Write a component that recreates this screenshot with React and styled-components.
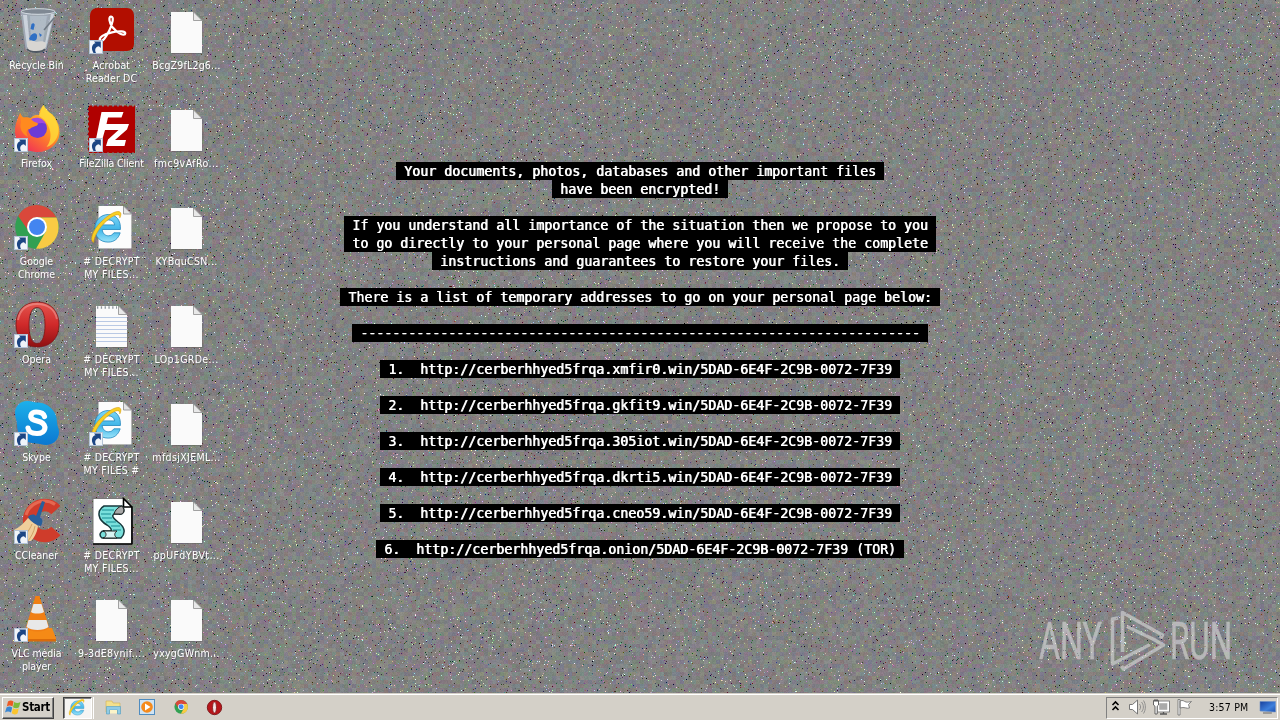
import React, { useEffect, useRef } from "react";
import styled, { createGlobalStyle } from "styled-components";

const Global = createGlobalStyle`
  * { box-sizing: border-box; }
  body { margin: 0; overflow: hidden; background: #808080; }
`;

const Screen = styled.div`
  position: relative;
  width: 1280px;
  height: 720px;
  display: flex;
  flex-direction: column;
  overflow: hidden;
  font-family: "DejaVu Sans Condensed", "DejaVu Sans", sans-serif;
`;

const NoiseCanvas = styled.canvas`
  position: absolute;
  inset: 0;
`;

const Desktop = styled.main`
  position: relative;
  flex: 1;
  display: flex;
`;

const IconGrid = styled.div`
  width: 224px;
  padding-top: 7px;
  margin-left: -1px;
  display: grid;
  grid-template-columns: repeat(3, 75px);
  grid-template-rows: repeat(7, 98px);
  grid-auto-flow: column;
`;

const IconCell = styled.div`
  display: flex;
  flex-direction: column;
  align-items: center;
`;

const IconArt = styled.svg`
  display: block;
  width: 48px;
  height: 48px;
  margin-right: 1px;
  flex: none;
`;

const Label = styled.div`
  margin-top: 4px;
  text-align: center;
  color: #fff;
  font-size: 10.5px;
  line-height: 13px;
  white-space: nowrap;
  letter-spacing: ${(p) => p.$track || 0}px;
  text-shadow: 1px 1px 1px rgba(0, 0, 0, 0.2);
`;

const Message = styled.section`
  flex: none;
  width: 640px;
  margin-left: 97px;
  padding-top: 162px;
  display: flex;
  flex-direction: column;
  align-items: center;
`;

const MessageLine = styled.div`
  height: 18px;
  margin-bottom: ${(p) => (p.$gap ? 18 : 0)}px;
  padding: 1px 8px 0;
  background: #000;
  color: #fff;
  font: 13.29px/18px "DejaVu Sans Mono", monospace;
  text-shadow: 0.7px 0 #fff;
  white-space: pre;
`;

const Watermark = styled.div`
  position: absolute;
  left: 1038px;
  top: 608px;
  display: flex;
  align-items: center;
  height: 64px;
  opacity: 0.62;
`;

const MarkWord = styled.svg`
  display: block;
  width: ${(p) => p.$w}px;
  height: 64px;
  overflow: visible;
`;

const MarkText = styled.text`
  font-family: Roboto, sans-serif;
  font-size: 52px;
  fill: #d8d8d8;
  stroke: #d8d8d8;
  stroke-width: 0.6px;
`;

const Taskbar = styled.footer`
  position: relative;
  height: 28px;
  flex: none;
  background: #d4d0c8;
  border-top: 1px solid #d4d0c8;
  box-shadow: inset 0 1px #fff;
  display: flex;
  align-items: flex-start;
  padding: 3px 2px 2px 2px;
`;

const StartButton = styled.div`
  width: 52px;
  height: 22px;
  display: flex;
  align-items: center;
  gap: 1px;
  padding: 0 0 2px 1px;
  border: 1px solid;
  border-color: #fff #404040 #404040 #fff;
  box-shadow: inset -1px -1px #808080;
  color: #000;
  font-weight: bold;
  font-size: 11.5px;
  letter-spacing: -0.3px;
`;

const QuickLaunch = styled.nav`
  display: flex;
  align-items: center;
  height: 22px;
  margin-left: 9px;
`;

const LaunchItem = styled.div`
  width: 34px;
  height: 22px;
  padding-bottom: 2px;
  display: flex;
  align-items: center;
  justify-content: center;
`;

const ActiveItem = styled(LaunchItem)`
  width: 29px;
  padding-right: 1px;
  border: 1px solid;
  border-color: #404040 #fff #fff #404040;
  box-shadow: inset 1px 1px #808080, 1px 0 #d4d0c8, 2px 0 #fff;
  background: #f6f5f3;
  margin-right: 4px;
`;

const Tray = styled.div`
  margin-left: auto;
  width: 172px;
  height: 22px;
  padding-bottom: 2px;
  display: flex;
  align-items: center;
  border: 1px solid;
  border-color: #808080 #fff #fff #808080;
`;

const Clock = styled.time`
  width: 42px;
  margin-left: 15px;
  margin-right: 8px;
  color: #000;
  font-size: 10.5px;
  letter-spacing: 0.2px;
  white-space: nowrap;
`;

const SmallArt = styled.svg`
  display: block;
  width: ${(p) => p.$w || 18}px;
  height: 18px;
  margin-left: ${(p) => p.$ml || 0}px;
  flex: none;
`;

function Noise() {
  const ref = useRef(null);
  useEffect(() => {
    const W = 1280;
    const H = 693;
    const ctx = ref.current.getContext("2d");
    const img = ctx.createImageData(W, H);
    let seed = 90137;
    const rnd = () => {
      seed ^= seed << 13;
      seed ^= seed >>> 17;
      seed ^= seed << 5;
      return (seed >>> 0) / 4294967296;
    };
    const cw = W / 4 + 1;
    const tint = Array.from({ length: Math.ceil(cw * (H / 4 + 2)) }, () => [0, 1, 2].map(() => (rnd() - 0.5) * 22));
    const d = img.data;
    for (let y = 0; y < H; y++) {
      for (let x = 0; x < W; x++) {
        const i = (y * W + x) * 4;
        const t = tint[(y >> 2) * cw + (x >> 2)];
        const speck = rnd() < 0.042;
        const dark = rnd() < 0.5;
        const luma = speck ? (dark ? 30 + rnd() * 80 : 145 + rnd() * 85) : 130 + (rnd() - 0.5) * 12;
        for (let c = 0; c < 3; c++) {
          d[i + c] = luma + t[c] + (speck ? (rnd() - 0.5) * 100 : 0);
        }
        d[i + 3] = 255;
      }
    }
    ctx.putImageData(img, 0, 0);
  }, []);
  return <NoiseCanvas ref={ref} width={1280} height={693} />;
}

const Shortcut = () => (
  <g>
    <rect x="2.500" y="33.500" width="13" height="13" fill="#f0f4f9" stroke="#b4c3d6" strokeWidth="1" />
    <path d="M6.500 46c-3-5-1.200-9.200 2-9.700L7 34.500h6.800V41l-1.900-1.700c-3.400.4-4.600 3.300-2.900 6.700z" fill="#1c4583" />
  </g>
);

const BlankPage = () => (
  <g>
    <path d="M10 6h22l8.500 8V47H10z" fill="#444" opacity=".3" />
    <path d="M9 5h22.500l8.500 8.500V46H9z" fill="#fafafa" />
    <path d="M31.500 5v8.500H40z" fill="#e8e8e8" stroke="#8d8d8d" strokeWidth=".8" />
  </g>
);

const IeLetter = () => (
  <g>
    <path
      d="M33.400 26.500H15.200c.4 4.200 3.200 6.300 6.300 6.300 2.600 0 4.200-1.200 5.400-3h6.300c-2 6-6 9.300-12.100 9.300-8.200 0-13.300-5.700-13.300-13.400 0-8.200 6-14.200 13.500-14.200 8.400 0 12.700 6.400 12.100 15z M27.700 21.900c-.7-3.200-2.900-5-6-5-3.100 0-5.300 1.800-6.200 5z"
      fill="url(#ieBlue)" fillRule="evenodd" stroke="#2186bd" strokeWidth=".8"
    />
    <path d="M6.600 39.500C2.500 37.600 5.300 27.500 13.500 19.500 22 10.800 31.500 6 33.600 9.800c.6 1.200.2 3-.8 5 .3-3.300-1.800-3.600-4.800-2.600C18.500 16.500 7.500 29.500 6.600 39.500z" fill="#f8cf24" stroke="#d79b0c" strokeWidth=".6" />
  </g>
);

const WebPage = () => (
  <g>
    <path d="M12 4h24l9 8.500V46H12z" fill="#444" opacity=".3" />
    <path d="M11.500 3h25l8 8v34.500h-33z" fill="#fcfcfc" />
    <path d="M36.500 3v8h8z" fill="#e4e4e4" stroke="#888" strokeWidth=".8" />
    <IeLetter />
  </g>
);

const ChromeWheel = () => (
  <g>
    <circle cx="25" cy="24" r="21.800" fill="#31a052" />
    <path d="M6.200 13C14-2 36-2 44.500 14.500H25a9.500 9.500 0 0 0-8.800 13z" fill="#d9483b" />
    <path d="M44.500 14.500H25a10 10 0 0 1 8.500 14.500L24 45.800c18 .8 27-17 20.500-31.300z" fill="#f9cb44" />
    <circle cx="25" cy="24" r="10" fill="#fff" />
    <circle cx="25" cy="24" r="8" fill="#4385f0" />
  </g>
);

const icons = {
  bin: (
    <g>
      <path d="M8.500 4l5 38c2 5 19 5 21 0l9-38z" fill="#a3aebb" opacity=".85" />
      <path d="M11 8l4 32h3L15 8zM39 7l-7 34 2-1 8-33z" fill="#dfe6ee" opacity=".7" />
      <path d="M18 9h17l-4 26H19z" fill="#bcc8d4" opacity=".6" />
      <ellipse cx="26" cy="4.500" rx="17" ry="2.800" fill="#7f8893" stroke="#d4dbe2" strokeWidth="1" />
      <path d="M19.500 17c2-2 4 0 3 2l-1 4-3-1zM18 30c2-5 8-5 7 0 0 5-5 5-8 2zM27 26l3 2-2 2z" fill="#2f6fc4" />
      <path d="M32 23l10-12" stroke="#6d7782" strokeWidth="1.500" />
      <path d="M15 35c3-2 6-2 9 0 4-1 8-1 10 1l-1 8c-4 2-14 2-17 0z" fill="#d8d5d2" />
      <path d="M15 42c3 4 16 4 18 0" stroke="#4f5862" strokeWidth="2" fill="none" />
    </g>
  ),
  acrobat: (
    <g>
      <rect x="3" y="1" width="44" height="43" rx="7" fill="#b20e00" />
      <path d="M13 33.500c-1.500-3 4-6.500 12-8.200 7.500-1.600 13.500-1.500 13.300 1.200-.3 3.200-8.500-.5-13-6.500-3-4.200-4-10-1.500-10.300 3.600-.3 2 6.300-1.500 13.800-3.200 6.500-7 12-9.300 10z" fill="none" stroke="#fff" strokeWidth="2.200" />
      <Shortcut />
    </g>
  ),
  firefox: (
    <g>
      <path d="M8 8c1 2 2 3.500 3.500 4.500 2-.5 5-.5 7 .5C22 10 24 9.500 27 10c0-4 2-7 4.500-10 2 5 5 7 9 9.500 5 6 7.500 12.500 7 19.500C46.500 39 37 47 26 47 12 47 3 38 3 26c0-7 2.500-12 5-18z" fill="url(#fox)" />
      <path d="M27 11c2-4 2-8 4.500-11 3 6 9 9 12 15 4 7 4 14 0 20-2 3-5 6-9 7 4-5 5-12 3-18-2-6-5-10-10.500-13z" fill="#ffdc3a" opacity=".8" />
      <circle cx="25.500" cy="23.500" r="9.500" fill="#6b3bd6" />
      <path d="M18 15c5-4 13-3 16 4-4-2-9 0-12 0z" fill="#a04ae0" />
      <path d="M8 8c1 3 3 5 5 5 3-1 6 0 8 3 2 2 5 1 5 3-1 3-6 2-8 5-4 0-4 4-2 8-6-3-9-9-7-15 0-4-1-6-1-9z" fill="#ff8a1f" />
      <Shortcut />
    </g>
  ),
  filezilla: (
    <g>
      <rect x="2" y="1.500" width="46" height="46" fill="#b00000" stroke="#b00000" strokeWidth="2" strokeDasharray="3 2" />
      <path d="M14.500 7h22l-2 5.500H21l-1.500 6.500H30l-2 6H18l-4 14H8zM25 19h17l-2 5.500L28 35h11l-1.500 6H19l2-6.500L31.500 25h-8z" fill="#fff" />
      <Shortcut />
    </g>
  ),
  chrome: (
    <g>
      <ChromeWheel />
      <Shortcut />
    </g>
  ),
  opera: (
    <g>
      <path d="M25.500 1C39 1 47 10.500 47 23.500S39 46 25.500 46 4 36.500 4 23.500 12 1 25.500 1zM25 6.500c-6 0-8 8-8 17.500s2 18.500 8 18.500S33 33 33 24 31 6.500 25 6.500z" fill="url(#operaRed)" fillRule="evenodd" stroke="#7c1516" strokeWidth=".8" />
      <path d="M6 19C8 8 15 3 25 3c11 0 18 6 20 15" stroke="#f2a9a3" strokeWidth="2" fill="none" opacity=".5" />
      <Shortcut />
    </g>
  ),
  skype: (
    <g>
      <path d="M15 2c5 0 6 1.500 10 1.500 11 0 20 8.500 20 19.500 0 4 2 6 2 10 0 8-6 13-13 13-4 0-6-1.500-10-1.500C12 44.500 5 36 5 26c0-5-2-7-2-12C3 7 8 2 15 2z" fill="url(#skypeBlue)" />
      <path d="M32.500 17.500c-1-3.500-3.500-4.500-8-4.500-6 0-8 6-2.500 8l6.500 2c7 3 5.500 11.500-3.500 11.500-6 0-8.500-2-9-5.500" stroke="#fff" strokeWidth="5.200" fill="none" strokeLinecap="round" />
      <Shortcut />
    </g>
  ),
  ccleaner: (
    <g>
      <path d="M44 13A15.500 15.500 0 1 0 44 34" fill="none" stroke="#cf3c2b" strokeWidth="12.500" />
      <path d="M43 7.500A19 19 0 0 0 14 18" fill="none" stroke="#ee7a62" strokeWidth="3" opacity=".7" />
      <path d="M2 33c6-3 10-7 14-12l10 8c-1 7-4 12-7 15H7z" fill="#efcf9b" />
      <path d="M9 42c4-3 8-8 11-15M16 44c3-4 6-9 7-15" stroke="#cfa266" fill="none" />
      <path d="M16 20c3-3 6-3 8-1l6-15 3 1-5 15c3 2 3 5 1 9-5-1-10-4-13-9z" fill="#285f9c" />
      <Shortcut />
    </g>
  ),
  vlc: (
    <g>
      <path d="M12 33h28l4 10v3H10z" fill="#f58a16" />
      <path d="M12 44h32v2.500H12z" fill="#d96b0a" />
      <path d="M23.500 1h4L37 32c-3 6-20 6-23 0z" fill="#f07f14" />
      <path d="M21.500 9h8l2.500 8c-3 2-10.500 2-13 0zM16.500 25h18l2 7c-5 4-17 4-22 0z" fill="#e8e8e8" />
      <Shortcut />
    </g>
  ),
  page: <BlankPage />,
  iePage: <WebPage />,
  ieLink: (
    <g>
      <WebPage />
      <Shortcut />
    </g>
  ),
  notes: (
    <g>
      <BlankPage />
      <path d="M9 16.500h31M9 20.500h31M9 24.500h31M9 28.500h31M9 32.500h31M9 36.500h31M9 40.500h31" stroke="#b9c9e4" strokeWidth="1.200" />
      <path d="M10 6.500h20" stroke="#8d949c" strokeWidth="2.500" strokeDasharray="1.300 2.500" />
    </g>
  ),
  script: (
    <g>
      <path d="M6 1.500h30.500l8 8.500v37H6z" fill="#fff" stroke="#777" />
      <path d="M6 47h39V10h-8.500V1.500L45 10" fill="none" stroke="#000" strokeWidth="1.600" />
      <path d="M17 9h18c4 5 1 9-3 8h-5c-3 2 0 5 4 8 7 5 8 11 3 16H15c-4-3-1-8 3-7h6c1-2-1-4-4-6-9-5-11-14-3-19z" fill="#79e0dc" stroke="#17383c" strokeWidth="1.500" />
      <path d="M15 13h12M14 17h10M15 21h10M19 25h10M24 29h9M26 33h8" stroke="#198d93" />
      <path d="M35 9c4 5 1 9-3 8h-5c1-4 4-7 8-8z" fill="#aaa" stroke="#222" />
      <path d="M16 34c4 1 4 6 0 7h14c-3-2-3-5 0-7z" fill="#d7f4f3" stroke="#222" />
    </g>
  ),
};

const desktopItems = [
  ["bin", ["Recycle Bin"]],
  ["firefox", ["Firefox"]],
  ["chrome", ["Google", "Chrome"]],
  ["opera", ["Opera"]],
  ["skype", ["Skype"]],
  ["ccleaner", ["CCleaner"]],
  ["vlc", ["VLC media", "player"], -0.1],
  ["acrobat", ["Acrobat", "Reader DC"], 0.15],
  ["filezilla", ["FileZilla Client"], -0.1],
  ["iePage", ["# DECRYPT", "MY FILES..."], 0.3],
  ["notes", ["# DECRYPT", "MY FILES..."], 0.3],
  ["ieLink", ["# DECRYPT", "MY FILES #"], 0.25],
  ["script", ["# DECRYPT", "MY FILES..."], 0.3],
  ["page", ["9-3dE8ynif...."], 0.35],
  ["page", ["BcgZ9fL2g6..."], 0.2],
  ["page", ["fmc9vAfRo..."], 0.45],
  ["page", ["KYBquCSN..."], 0.3],
  ["page", ["LOp1GRDe..."], 0.35],
  ["page", ["mfdsjXJEML..."], 0.35],
  ["page", ["ppUFdYBVt..."], 0.4],
  ["page", ["yxygGWnm..."], 0.25],
];

const lines = [
  ["Your documents, photos, databases and other important files"],
  ["have been encrypted!", true],
  ["If you understand all importance of the situation then we propose to you"],
  ["to go directly to your personal page where you will receive the complete"],
  ["instructions and guarantees to restore your files.", true],
  ["There is a list of temporary addresses to go on your personal page below:", true],
  ["-".repeat(70), true],
  ["1.  http://cerberhhyed5frqa.xmfir0.win/5DAD-6E4F-2C9B-0072-7F39", true],
  ["2.  http://cerberhhyed5frqa.gkfit9.win/5DAD-6E4F-2C9B-0072-7F39", true],
  ["3.  http://cerberhhyed5frqa.305iot.win/5DAD-6E4F-2C9B-0072-7F39", true],
  ["4.  http://cerberhhyed5frqa.dkrti5.win/5DAD-6E4F-2C9B-0072-7F39", true],
  ["5.  http://cerberhhyed5frqa.cneo59.win/5DAD-6E4F-2C9B-0072-7F39", true],
  ["6.  http://cerberhhyed5frqa.onion/5DAD-6E4F-2C9B-0072-7F39 (TOR)"],
];

const HiddenDefs = styled.svg`
  position: absolute;
`;

const Defs = () => (
  <HiddenDefs width="0" height="0">
    <defs>
      <linearGradient id="ieBlue" x1="0" y1="0" x2="0" y2="1">
        <stop offset="0" stopColor="#7fd6f7" />
        <stop offset=".55" stopColor="#3fb5e8" />
        <stop offset="1" stopColor="#9be4fa" />
      </linearGradient>
      <linearGradient id="fox" x1=".9" y1="0" x2=".2" y2="1">
        <stop offset="0" stopColor="#ffe23a" />
        <stop offset=".5" stopColor="#ff8a24" />
        <stop offset="1" stopColor="#f0285c" />
      </linearGradient>
      <linearGradient id="operaRed" x1="0" y1="0" x2="0" y2="1">
        <stop offset="0" stopColor="#e5564f" />
        <stop offset=".5" stopColor="#d02a2a" />
        <stop offset="1" stopColor="#8f0f12" />
      </linearGradient>
      <linearGradient id="skypeBlue" x1="0" y1="0" x2="0" y2="1">
        <stop offset="0" stopColor="#1cb0ea" />
        <stop offset="1" stopColor="#0b78d0" />
      </linearGradient>
      <linearGradient id="screenBlue" x1="0" y1="0" x2="1" y2="1">
        <stop offset="0" stopColor="#173f9c" />
        <stop offset=".6" stopColor="#3e80dc" />
        <stop offset="1" stopColor="#1c4fae" />
      </linearGradient>
    </defs>
  </HiddenDefs>
);

export default function App() {
  return (
    <Screen>
      <Global />
      <Defs />
      <Noise />
      <Desktop>
        <IconGrid>
          {desktopItems.map(([icon, label, track], i) => (
            <IconCell key={i}>
              <IconArt viewBox="0 0 48 48">{icons[icon]}</IconArt>
              <Label $track={track}>
                {label.map((l) => (
                  <div key={l}>{l}</div>
                ))}
              </Label>
            </IconCell>
          ))}
        </IconGrid>
        <Message>
          {lines.map(([text, gap], i) => (
            <MessageLine key={i} $gap={gap}>
              {text}
            </MessageLine>
          ))}
        </Message>
        <Watermark>
          <MarkWord $w={70} viewBox="0 0 70 64">
            <MarkText x="1" y="51" textLength="63" lengthAdjust="spacingAndGlyphs">ANY</MarkText>
          </MarkWord>
          <MarkWord $w={60} viewBox="0 0 60 64">
            <path
              d="M10 10L4.500 11v45L42 36.500M14.500 44V4.500L54.500 27l-2 3.500M19 18.500L49 33M44 30.500L55.500 37 15.500 61l-2-3"
              fill="none" stroke="#d8d8d8" strokeWidth="3.600" strokeLinejoin="round"
            />
          </MarkWord>
          <MarkWord $w={66} viewBox="0 0 66 64">
            <MarkText x="2" y="51" textLength="62" lengthAdjust="spacingAndGlyphs">RUN</MarkText>
          </MarkWord>
        </Watermark>
      </Desktop>
      <Taskbar>
        <StartButton>
          <SmallArt $w={17} viewBox="0 0 17 18">
            <path d="M4 3.500c2-1.500 3.500-1.500 5.500 0L8.500 8.500c-2-1.500-3.500-1.500-5.700 0z" fill="#ec5a24" />
            <path d="M10.200 4c2 1.400 4 1.400 6.300 0l-1.500 5.300c-2 1.300-3.800 1.200-6 0z" fill="#7dba3c" />
            <path d="M2.500 9.500c2.200-1.500 3.800-1.400 5.700 0L7 14.500c-2-1.400-4-1.400-6 0z" fill="#3b87d2" />
            <path d="M9 10.200c2 1.300 3.800 1.300 5.800 0l-1.300 5.300c-2 1.200-4 1.200-5.800-.2z" fill="#fbc42d" />
          </SmallArt>
          Start
        </StartButton>
        <QuickLaunch>
          <ActiveItem>
            <SmallArt viewBox="3 6 34 35">
              <IeLetter />
            </SmallArt>
          </ActiveItem>
          <LaunchItem>
            <SmallArt viewBox="0 0 18 18">
              <path d="M2 3h6l1 2h7v9H2z" fill="#f3e08c" stroke="#d0b050" strokeWidth=".6" />
              <path d="M2.500 8.500h14V16h-3v-4h-8v4h-3z" fill="#8fcbe6" stroke="#4f9dc4" strokeWidth=".6" />
              <path d="M6 12h7v3.500H6z" fill="#fbf3c8" />
            </SmallArt>
          </LaunchItem>
          <LaunchItem>
            <SmallArt viewBox="0 0 18 18">
              <rect x="1.500" y="1.500" width="15" height="15" fill="#cfe3f3" stroke="#4f8cc0" />
              <circle cx="9" cy="9" r="5.800" fill="#f58a1c" />
              <path d="M7 5.500v7L12.500 9z" fill="#fff" />
            </SmallArt>
          </LaunchItem>
          <LaunchItem>
            <SmallArt $w={14} viewBox="2 2 45 45">
              <ChromeWheel />
            </SmallArt>
          </LaunchItem>
          <LaunchItem>
            <SmallArt viewBox="0 0 18 18">
              <circle cx="8.500" cy="9.500" r="7.200" fill="#b8161b" stroke="#6e080b" strokeWidth=".8" />
              <ellipse cx="8.500" cy="9.500" rx="2" ry="5.400" fill="#f4e4e4" stroke="#600" strokeWidth=".7" />
            </SmallArt>
          </LaunchItem>
        </QuickLaunch>
        <Tray>
          <SmallArt $w={18} viewBox="0 0 18 18">
            <path d="M5.500 7L8.500 4l3 3M5.500 12l3-3 3 3" fill="none" stroke="#000" strokeWidth="1.600" />
          </SmallArt>
          <SmallArt $w={18} $ml={3} viewBox="0 0 18 18">
            <path d="M1.500 6.500h3l5-4.500v14l-5-4.500h-3z" fill="#fff" stroke="#777" />
            <path d="M11.500 6c1.500 2 1.500 4 0 6M13.500 4c2.500 3 2.500 7 0 10M15.500 2.500c2.500 4 2.500 9 0 13" fill="none" stroke="#888" strokeWidth=".9" />
          </SmallArt>
          <SmallArt $w={18} $ml={6} viewBox="0 0 18 18">
            <rect x="6" y="4" width="10.500" height="9" fill="#aaa" stroke="#fff" strokeWidth="2.400" />
            <rect x="5" y="3" width="12.500" height="11" fill="none" stroke="#666" strokeWidth=".8" />
            <path d="M8 16h7M11.500 14v2" stroke="#555" strokeWidth="1.300" />
            <path d="M1.500 2.500h5V7l-1.300 1.200V16H3V8.200L1.500 7z" fill="#fff" stroke="#555" strokeWidth=".9" />
            <path d="M3 1v3M5 1v3" stroke="#555" />
          </SmallArt>
          <SmallArt $w={18} $ml={6} viewBox="0 0 18 18">
            <path d="M2 1.500h2V17H2zM4 3c3-1.500 4 .5 6 1 2 .4 3 0 5.500-.5l-3 3 1 3.500c-3 1-5-1.500-9.500 0z" fill="#fff" stroke="#777" strokeWidth=".9" />
          </SmallArt>
          <Clock>3:57 PM</Clock>
          <SmallArt $w={17} viewBox="0 0 17 18">
            <path d="M1 3.500h15.500v10.500L1 13z" fill="url(#screenBlue)" stroke="#6d8fc4" strokeWidth=".6" />
            <path d="M4 15h9" stroke="#777" strokeWidth="1.200" />
          </SmallArt>
        </Tray>
      </Taskbar>
    </Screen>
  );
}
